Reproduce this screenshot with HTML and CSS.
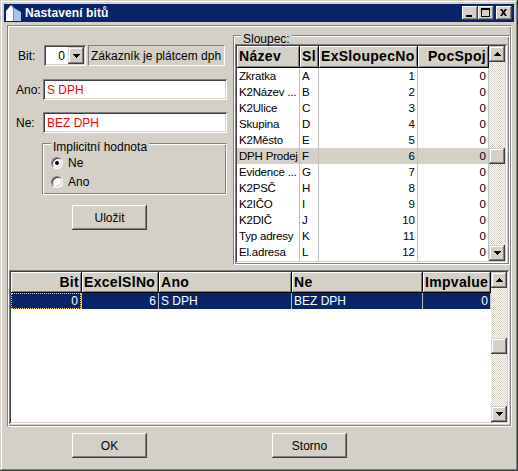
FILE: index.html
```html
<!DOCTYPE html>
<html lang="cs">
<head>
<meta charset="utf-8">
<title>Nastavení bitů</title>
<link rel="stylesheet" href="styles.css">
</head>
<body>
<div class="window">
  <div class="titlebar">
    <svg class="app-icon" width="16" height="16" viewBox="0 0 16 16">
      <polygon points="0,16 0,6 5,0 8,3 8,16" fill="#ffffff"/>
      <polygon points="8,16 8,3 15,7 15,16" fill="#a9c4e6"/>
      <polygon points="5,0 8,3 8,16 7,16 7,4" fill="#6f93c8"/>
    </svg>
    <span class="title">Nastavení bitů</span>
    <div class="caption-buttons">
      <span class="cap-btn"><svg width="16" height="14" viewBox="0 0 16 14"><rect x="4" y="9" width="6" height="2" fill="#000"/></svg></span>
      <span class="cap-btn"><svg width="16" height="14" viewBox="0 0 16 14"><path d="M3 2h9v9h-9z M4 4h7v6h-7z" fill="#000" fill-rule="evenodd"/></svg></span>
      <span class="cap-btn close"><svg width="16" height="14" viewBox="0 0 16 14"><path d="M4 3h2l1.5 2 1.5-2h2l-2.5 3.5 2.5 3.5h-2l-1.5-2-1.5 2h-2l2.5-3.5z" fill="#000"/></svg></span>
    </div>
  </div>
  <div class="client">
    <div class="main">
      <div class="top">
        <div class="form">
          <div class="row row-bit">
            <span class="lbl lbl-bit">Bit:</span>
            <div class="combo sunken">
              <span class="combo-val">0</span>
              <span class="combo-btn raised">
                <svg width="7" height="4" viewBox="0 0 7 4"><path d="M0 0h7v1h-1v1h-1v1h-1v1h-1v-1h-1v-1h-1v-1h-1z" fill="#000"/></svg>
              </span>
            </div>
            <div class="static">Zákazník je plátcem dph</div>
          </div>
          <div class="row row-ano">
            <span class="lbl">Ano:</span>
            <div class="edit sunken">S DPH</div>
          </div>
          <div class="row row-ne">
            <span class="lbl">Ne:</span>
            <div class="edit sunken">BEZ DPH</div>
          </div>
          <div class="group group-imp">
            <div class="caption">Implicitní hodnota</div>
            <div class="radio-row"><span class="radio checked"></span><span>Ne</span></div>
            <div class="radio-row"><span class="radio"></span><span>Ano</span></div>
          </div>
          <div class="btn btn-save">Uložit</div>
        </div>
        <div class="group group-col">
          <div class="caption">Sloupec:</div>
          <div class="grid grid-top">
            <div class="grid-main">
              <div class="grow ghead">
                <span class="c c-naz">Název</span><span class="c c-sl">Sl</span><span class="c c-ex">ExSloupecNo</span><span class="c c-poc r">PocSpoj</span>
              </div>
              <div class="grow"><span class="c c-naz">Zkratka</span><span class="c c-sl">A</span><span class="c c-ex r">1</span><span class="c c-poc r">0</span></div>
              <div class="grow"><span class="c c-naz">K2Název ...</span><span class="c c-sl">B</span><span class="c c-ex r">2</span><span class="c c-poc r">0</span></div>
              <div class="grow"><span class="c c-naz">K2Ulice</span><span class="c c-sl">C</span><span class="c c-ex r">3</span><span class="c c-poc r">0</span></div>
              <div class="grow"><span class="c c-naz">Skupina</span><span class="c c-sl">D</span><span class="c c-ex r">4</span><span class="c c-poc r">0</span></div>
              <div class="grow"><span class="c c-naz">K2Město</span><span class="c c-sl">E</span><span class="c c-ex r">5</span><span class="c c-poc r">0</span></div>
              <div class="grow hl"><span class="c c-naz">DPH Prodej</span><span class="c c-sl">F</span><span class="c c-ex r">6</span><span class="c c-poc r">0</span></div>
              <div class="grow"><span class="c c-naz">Evidence ...</span><span class="c c-sl">G</span><span class="c c-ex r">7</span><span class="c c-poc r">0</span></div>
              <div class="grow"><span class="c c-naz">K2PSČ</span><span class="c c-sl">H</span><span class="c c-ex r">8</span><span class="c c-poc r">0</span></div>
              <div class="grow"><span class="c c-naz">K2IČO</span><span class="c c-sl">I</span><span class="c c-ex r">9</span><span class="c c-poc r">0</span></div>
              <div class="grow"><span class="c c-naz">K2DIČ</span><span class="c c-sl">J</span><span class="c c-ex r">10</span><span class="c c-poc r">0</span></div>
              <div class="grow"><span class="c c-naz">Typ adresy</span><span class="c c-sl">K</span><span class="c c-ex r">11</span><span class="c c-poc r">0</span></div>
              <div class="grow"><span class="c c-naz">El.adresa</span><span class="c c-sl">L</span><span class="c c-ex r">12</span><span class="c c-poc r">0</span></div>
              <div class="grow"><span class="c c-naz"></span><span class="c c-sl"></span><span class="c c-ex"></span><span class="c c-poc"></span></div>
            </div>
            <div class="vscroll vscroll-top">
              <span class="sb-btn raised"><svg width="7" height="4" viewBox="0 0 7 4"><path d="M3 0h1v1h1v1h1v1h1v1h-7v-1h1v-1h1v-1h1z" fill="#000"/></svg></span>
              <span class="sb-track sb-track-a1"></span>
              <span class="sb-thumb raised"></span>
              <span class="sb-track"></span>
              <span class="sb-btn raised"><svg width="7" height="4" viewBox="0 0 7 4"><path d="M0 0h7v1h-1v1h-1v1h-1v1h-1v-1h-1v-1h-1v-1h-1z" fill="#000"/></svg></span>
            </div>
          </div>
        </div>
      </div>
      <div class="grid grid-bottom">
        <div class="grid-main">
          <div class="grow ghead bhead">
            <span class="c b-bit r">Bit</span><span class="c b-ex">ExcelSlNo</span><span class="c b-ano">Ano</span><span class="c b-ne">Ne</span><span class="c b-imp">Impvalue</span>
          </div>
          <div class="grow sel">
            <span class="c b-bit r"><span class="focus">0</span></span><span class="c b-ex r">6</span><span class="c b-ano">S DPH</span><span class="c b-ne">BEZ DPH</span><span class="c b-imp r">0</span>
          </div>
        </div>
        <div class="vscroll vscroll-bottom">
          <span class="sb-btn raised"><svg width="7" height="4" viewBox="0 0 7 4"><path d="M3 0h1v1h1v1h1v1h1v1h-7v-1h1v-1h1v-1h1z" fill="#000"/></svg></span>
          <span class="sb-track sb-track-b1"></span>
          <span class="sb-thumb raised"></span>
          <span class="sb-track"></span>
          <span class="sb-btn raised"><svg width="7" height="4" viewBox="0 0 7 4"><path d="M0 0h7v1h-1v1h-1v1h-1v1h-1v-1h-1v-1h-1v-1h-1z" fill="#000"/></svg></span>
        </div>
      </div>
    </div>
    <div class="buttons">
      <div class="btn btn-ok">OK</div>
      <div class="btn btn-storno">Storno</div>
    </div>
  </div>
</div>
</body>
</html>
```

FILE: styles.css
```css
* { box-sizing: border-box; }
html, body { margin: 0; padding: 0; }
body {
  width: 518px;
  height: 471px;
  background: #d4d0c8;
  font-family: "Liberation Sans", Arial, sans-serif;
  font-size: 12px;
  color: #000;
  overflow: hidden;
}

/* ---------- window frame ---------- */
.window {
  width: 518px;
  height: 471px;
  padding: 4px;
  background: #d4d0c8;
  box-shadow: inset -1px -1px #404040, inset 1px 1px #d4d0c8,
              inset -2px -2px #808080, inset 2px 2px #ffffff;
  display: flex;
  flex-direction: column;
}
.titlebar {
  height: 18px;
  background: #0a246a;
  display: flex;
  align-items: center;
  padding-left: 2px;
  color: #fff;
}
.app-icon { flex: none; }
.title {
  font-weight: bold;
  font-size: 12px;
  margin-left: 3px;
  letter-spacing: 0.1px;
}
.caption-buttons {
  margin-left: auto;
  display: flex;
  padding-right: 2px;
}
.cap-btn {
  width: 16px;
  height: 14px;
  display: block;
  background: #d4d0c8;
  box-shadow: inset -1px -1px #404040, inset 1px 1px #ffffff,
              inset -2px -2px #808080, inset 2px 2px #d4d0c8;
}
.cap-btn svg { display: block; }
.cap-btn.close { margin-left: 2px; }

/* ---------- common bevels ---------- */
.raised {
  background: #d4d0c8;
  box-shadow: inset -1px -1px #404040, inset 1px 1px #d4d0c8,
              inset -2px -2px #808080, inset 2px 2px #ffffff;
}
.sunken {
  background: #fff;
  box-shadow: inset 1px 1px #808080, inset -1px -1px #ffffff,
              inset 2px 2px #404040, inset -2px -2px #d4d0c8;
}
.btn {
  width: 75px;
  height: 25px;
  display: flex;
  align-items: center;
  justify-content: center;
  background: #d4d0c8;
  box-shadow: inset -1px -1px #404040, inset 1px 1px #ffffff,
              inset -2px -2px #808080, inset 2px 2px #d4d0c8;
}

/* ---------- client ---------- */
.client {
  flex: 1;
  display: flex;
  flex-direction: column;
  padding: 3px 2px 0 3px;
}
.main {
  height: 402px;
  border: 1px solid;
  border-color: #808080 #ffffff #ffffff #808080;
  box-shadow: inset 1px 1px #ffffff, inset -1px -1px #808080;
  padding: 1px;
  display: flex;
  flex-direction: column;
}
.top {
  height: 239px;
  display: flex;
  align-items: flex-start;
}

/* ---------- left form ---------- */
.form {
  width: 224px;
  flex: none;
  padding-top: 18px;
}
.row { display: flex; align-items: center; }
.lbl { flex: none; }
.row-bit { padding-left: 9px; }
.lbl-bit { width: 26px; }
.combo {
  width: 42px;
  height: 21px;
  display: flex;
  align-items: center;
  padding: 2px;
}
.combo-val {
  flex: 1;
  text-align: right;
  padding-right: 3px;
}
.combo-btn {
  width: 16px;
  height: 17px;
  display: flex;
  align-items: center;
  justify-content: center;
}
.combo-btn svg { display: block; }
.static {
  margin-left: 2px;
  width: 137px;
  height: 21px;
  border: 1px solid;
  border-color: #808080 #ffffff #ffffff #808080;
  padding: 3px 2px 0 2px;
  white-space: nowrap;
}
.row-ano { margin-top: 13px; padding-left: 7px; }
.row-ne { margin-top: 12px; padding-left: 7px; }
.row-ano .lbl, .row-ne .lbl { width: 27px; }
.edit {
  width: 184px;
  height: 21px;
  color: #ff0000;
  padding: 4px 0 0 4px;
}

.group {
  border: 1px solid;
  border-color: #808080 #ffffff #ffffff #808080;
  box-shadow: inset 1px 1px #ffffff, inset -1px -1px #808080;
}
.caption {
  width: fit-content;
  background: #d4d0c8;
  line-height: 12px;
  padding: 0 2px;
  margin-top: -3px;
}
.group-imp {
  margin: 10px 0 0 33px;
  width: 185px;
  height: 52px;
}
.group-imp .caption { margin-left: 8px; }
.radio-row {
  display: flex;
  align-items: center;
  height: 19px;
  padding-left: 8px;
}
.radio {
  position: relative;
  width: 12px;
  height: 12px;
  border-radius: 50%;
  background: #fff;
  border: 1px solid;
  border-color: #808080 #ffffff #ffffff #808080;
  box-shadow: inset 1px 1px #404040, inset -1px -1px #d4d0c8;
  margin-right: 5px;
  display: flex;
  align-items: center;
  justify-content: center;
}
.radio.checked::after {
  content: "";
  width: 4px;
  height: 4px;
  border-radius: 50%;
  background: #000;
}
.btn-save { margin: 10px 0 0 63px; }

/* ---------- column group ---------- */
.group-col {
  margin-top: 8px;
  margin-left: auto;
  width: 277px;
  height: 230px;
  padding: 0 2px 0 1px;
}
.group-col .caption { margin-left: 6px; }

/* ---------- grids ---------- */
.grid {
  display: flex;
  background: #fff;
  box-shadow: inset 1px 1px #808080, inset -1px -1px #ffffff,
              inset 2px 2px #404040, inset -2px -2px #d4d0c8;
  padding: 2px;
  overflow: hidden;
}
.grid-main {
  flex: 1;
  overflow: hidden;
}
.grow {
  display: flex;
  height: 16px;
  line-height: 16px;
  font-size: 11.5px;
  white-space: nowrap;
}
.c {
  flex: none;
  border-right: 1px solid #c0c0c0;
  padding: 0 1px 0 2px;
  overflow: hidden;
  height: 100%;
}
.c.r { text-align: right; padding: 0 2px 0 1px; }
.c-naz { letter-spacing: -0.2px; }
.ghead {
  height: 22px;
  line-height: 20px;
  font-weight: bold;
  font-size: 14px;
  letter-spacing: 0.3px;
}
.ghead .c {
  background: #d4d0c8;
  border-right: 1px solid #000;
  border-bottom: 1px solid #000;
  box-shadow: inset 1px 1px #ffffff, inset -1px -1px #808080;
  letter-spacing: 0.3px;
}
.grid-top {
  width: 272px;
  height: 219px;
  margin-top: -1px;
}
.c-naz { width: 63px; }
.c-sl { width: 19px; }
.c-ex { width: 99px; }
.c-poc { width: 71px; }
.grow.hl { background: #d4d0c8; }

.grid-bottom {
  margin-top: 4px;
  width: 500px;
  height: 154px;
}
.bhead { height: 21px; line-height: 20px; }
.b-bit { width: 71px; }
.b-ex { width: 77px; }
.b-ano { width: 133px; }
.b-ne { width: 131px; }
.b-imp { width: 68px; }
.grow.sel { background: #0a246a; color: #fff; font-size: 12px; }
.grow.sel .c { border-right-color: #c0c0c0; }
.grow.sel .b-bit { padding: 0; }
.focus {
  display: block;
  height: 100%;
  line-height: 14px;
  border: 1px dotted #f0d870;
  padding-right: 2px;
}

/* ---------- scrollbars ---------- */
.vscroll {
  width: 16px;
  flex: none;
  display: flex;
  flex-direction: column;
}
.sb-btn {
  width: 16px;
  height: 16px;
  flex: none;
  display: flex;
  align-items: center;
  justify-content: center;
}
.sb-btn svg { display: block; }
.sb-track {
  flex: 1;
  background: repeating-conic-gradient(#d4d0c8 0 25%, #ffffff 0 50%) 0 0 / 2px 2px;
}
.sb-track-a1 { flex: none; height: 86px; }
.sb-track-b1 { flex: none; height: 50px; }
.sb-thumb { height: 16px; flex: none; }

/* ---------- bottom buttons ---------- */
.buttons {
  display: flex;
  margin-top: 6px;
  padding-left: 65px;
}
.btn-storno { margin-left: 125px; }
```
